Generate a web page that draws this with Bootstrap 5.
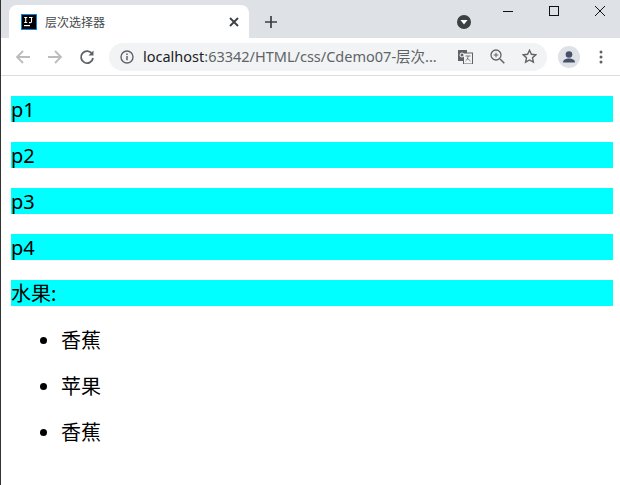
<!DOCTYPE html>
<html lang="zh">
<head>
    <meta charset="UTF-8">
    <title>层次选择器</title>
    <link href="https://cdn.jsdelivr.net/npm/bootstrap@5.3.2/dist/css/bootstrap.min.css" rel="stylesheet">
    <style>
        html, body { height: 485px; overflow: hidden; }
        body {
            background: #fff;
            color: #000;
            border-left: 1px solid #333;
            font-family: "Noto Sans", "Noto Sans CJK SC", sans-serif;
        }
        .tabstrip { height: 38px; background: #dee1e6; }
        .page-tab {
            width: 240px;
            height: 33px;
            margin-left: 8px;
            padding: 0 10px 0 12px;
            background: #fff;
            border-radius: 8px 8px 0 0;
        }
        .tab-title { font-size: 12px; color: #45494d; margin-left: 8px; font-family: "Noto Sans CJK SC", sans-serif; }
        .new-tab { margin-left: 15px; margin-bottom: 9px; }
        .media-btn { margin-left: 179px; margin-top: 15px; }
        .win-btns { margin-left: auto; margin-right: -3px; }
        .win-btn { width: 46px; height: 22px; }
        .toolbar { height: 38px; background: #fff; border-bottom: 1px solid #dadce0; padding-left: 14px; }
        .nav-ico { width: 16px; height: 16px; margin-right: 16px; }
        .omnibox {
            width: 438px;
            height: 28px;
            margin-left: -2px;
            padding: 0 10px 0 11px;
            background: #f1f3f4;
            border-radius: 14px;
            font-size: 14.5px;
            color: #5f6368;
            white-space: nowrap;
        }
        .url-host { color: #202124; }
        .url-text { margin-left: 9px; }
        .omni-icons { margin-left: auto; gap: 17px; }
        .avatar { margin-left: 11px; }
        .kebab { margin-left: 19px; }
        .demo-page { padding: 20px 7px 0 10px; font-size: 20px; }
        .demo-page p { margin: 0 0 20px; padding-top: 2px; line-height: 24px; background: #0ff; }
        .demo-page ul { margin: 0; padding-left: 50px; }
        .demo-page li { margin-bottom: 20px; padding-top: 4px; line-height: 22px; }
    </style>
</head>
<body>

<div class="tabstrip d-flex align-items-end">
    <div class="page-tab d-flex align-items-center">
        <svg width="16" height="16" viewBox="0 0 16 16">
            <rect x=".5" y=".5" width="15" height="15" fill="#000" stroke="#0a84e0"/>
            <rect x="3" y="11" width="6" height="1.2" fill="#fff"/>
            <path d="M3.2 3.5h3M4.7 3.5v5M3.2 8.5h3M8 3.5h3.6M10.5 3.5v4.2q0 .9-1.2.9H8" fill="none" stroke="#fff" stroke-width="1.1"/>
        </svg>
        <span class="tab-title">层次选择器</span>
        <svg class="ms-auto" width="10" height="10" viewBox="0 0 10 10"><path d="M1 1l8 8M9 1l-8 8" stroke="#3c4043" stroke-width="1.8"/></svg>
    </div>
    <svg class="new-tab" width="14" height="14" viewBox="0 0 14 14"><path d="M7 1v12M1 7h12" stroke="#3c4043" stroke-width="1.7"/></svg>
    <svg class="media-btn align-self-start" width="14" height="14" viewBox="0 0 14 14"><circle cx="7" cy="7" r="7" fill="#3c4043"/><path d="M3.5 5h7L7 9.5z" fill="#fff"/></svg>
    <div class="win-btns d-flex align-self-start">
        <div class="win-btn d-flex align-items-center justify-content-center"><svg width="10" height="10" viewBox="0 0 10 10"><path d="M0 5.5h10" stroke="#111"/></svg></div>
        <div class="win-btn d-flex align-items-center justify-content-center"><svg width="10" height="10" viewBox="0 0 10 10"><rect x=".5" y=".5" width="9" height="9" fill="none" stroke="#111"/></svg></div>
        <div class="win-btn d-flex align-items-center justify-content-center"><svg width="10" height="10" viewBox="0 0 10 10"><path d="M0 0l10 10M10 0L0 10" stroke="#111"/></svg></div>
    </div>
</div>

<div class="toolbar d-flex align-items-center">
    <svg class="nav-ico" viewBox="0 0 16 16"><path d="M15 8H2M8 2L2 8l6 6" fill="none" stroke="#babcbe" stroke-width="1.8"/></svg>
    <svg class="nav-ico" viewBox="0 0 16 16"><path d="M1 8h13M8 2l6 6-6 6" fill="none" stroke="#babcbe" stroke-width="1.8"/></svg>
    <svg class="nav-ico" viewBox="0 0 16 16"><path d="M13.2 5A6 6 0 1 0 14 9" fill="none" stroke="#5f6368" stroke-width="1.8"/><path d="M14.5 1.5v5h-5z" fill="#5f6368"/></svg>
    <div class="omnibox d-flex align-items-center">
        <svg width="14" height="14" viewBox="0 0 14 14"><circle cx="7" cy="7" r="6" fill="none" stroke="#5f6368" stroke-width="1.4"/><path d="M7 6v4.2M7 3.6v1.5" stroke="#5f6368" stroke-width="1.5"/></svg>
        <span class="url-text"><span class="url-host">localhost</span>:63342/HTML/css/Cdemo07-层次...</span>
        <div class="omni-icons d-flex align-items-center">
            <svg width="15" height="14" viewBox="0 0 15 14"><rect x="0" y="0" width="9" height="11" fill="#5f6368"/><rect x="5.5" y="3" width="9" height="11" fill="#f1f3f4" stroke="#5f6368"/><path d="M7.5 6h5M10 6c0 2-1 4-2.5 5M9 8l3.5 3" stroke="#5f6368" fill="none" stroke-width=".8"/><circle cx="4" cy="5" r="2" fill="none" stroke="#fff"/></svg>
            <svg width="15" height="15" viewBox="0 0 15 15"><circle cx="6" cy="6" r="5" fill="none" stroke="#5f6368" stroke-width="1.3"/><path d="M10 10l4.3 4.3" stroke="#5f6368" stroke-width="1.5"/><path d="M3.7 6h4.6M6 3.7v4.6" stroke="#5f6368"/></svg>
            <svg width="15" height="15" viewBox="0 0 15 15"><path d="M7.5 1.3l1.9 4 4.4.5-3.3 3 .9 4.4-3.9-2.2-3.9 2.2.9-4.4-3.3-3 4.4-.5z" fill="none" stroke="#5f6368" stroke-width="1.4"/></svg>
        </div>
    </div>
    <svg class="avatar" width="22" height="22" viewBox="0 0 22 22"><circle cx="11" cy="11" r="11" fill="#dee1e6"/><circle cx="11" cy="8.5" r="3.3" fill="#46506a"/><path d="M5 16.5c0-3 3-4 6-4s6 1 6 4z" fill="#46506a"/></svg>
    <svg class="kebab" width="4" height="14" viewBox="0 0 4 14"><circle cx="2" cy="2" r="1.5" fill="#5f6368"/><circle cx="2" cy="7" r="1.5" fill="#5f6368"/><circle cx="2" cy="12" r="1.5" fill="#5f6368"/></svg>
</div>

<div class="demo-page">
    <p>p1</p>
    <p>p2</p>
    <p>p3</p>
    <p>p4</p>
    <p>水果:</p>
    <ul>
        <li>香蕉</li>
        <li>苹果</li>
        <li>香蕉</li>
    </ul>
</div>

<script src="https://cdn.jsdelivr.net/npm/bootstrap@5.3.2/dist/js/bootstrap.bundle.min.js"></script>
</body>
</html>
